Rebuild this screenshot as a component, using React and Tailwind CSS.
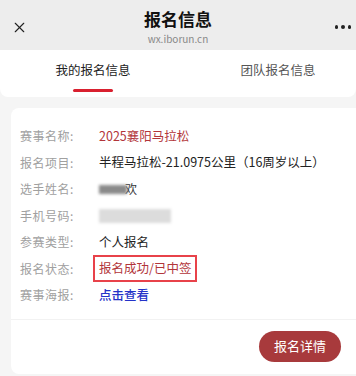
import { X } from 'lucide-react';

const rows = [
  { label: '赛事名称:', value: '2025襄阳马拉松', cls: 'text-[#b2353a]' },
  { label: '报名项目:', value: '半程马拉松-21.0975公里（16周岁以上）', cls: 'text-[#222]' },
  { label: '选手姓名:', blurName: true },
  { label: '手机号码:', blurPhone: true },
  { label: '参赛类型:', value: '个人报名', cls: 'text-[#222]' },
  { label: '报名状态:', value: '报名成功/已中签', cls: 'text-[#b2353a]', boxed: true },
  { label: '赛事海报:', value: '点击查看', cls: 'text-[#2432c8] font-medium' },
];

export default function App() {
  return (
    <div
      className="w-[356px] h-[376px] overflow-hidden bg-[#f5f5f5]"
      style={{ fontFamily: '"Noto Sans CJK SC", "Noto Sans", sans-serif' }}
    >
      {/* top bar */}
      <div className="h-[50px] bg-[#ededed] flex items-center">
        <div className="w-[60px] pl-[11px] pt-[4px]">
          <X size={17} strokeWidth={1.6} className="text-[#222]" />
        </div>
        <div className="flex-1 flex flex-col items-center pt-[4px]">
          <div className="text-[17px] font-bold leading-[20px] text-[#111]">报名信息</div>
          <div className="mt-[4px] text-[10px] leading-[12px] text-[#888]">wx.iborun.cn</div>
        </div>
        <div className="w-[60px] flex gap-[3px] justify-end pr-[5px] pt-[4px]">
          <span className="w-[3.5px] h-[3.5px] rounded-full bg-[#222]" />
          <span className="w-[3.5px] h-[3.5px] rounded-full bg-[#222]" />
          <span className="w-[3.5px] h-[3.5px] rounded-full bg-[#222]" />
        </div>
      </div>

      {/* tabs */}
      <div className="h-[47px] bg-white flex rounded-b-[8px]">
        <div className="w-[186px] shrink-0 flex flex-col items-center pt-[11px]">
          <span className="text-[12.5px] leading-[18px] text-[#222]">我的报名信息</span>
          <span className="mt-[10px] w-[40px] h-[3px] rounded-full bg-[#d9202f]" />
        </div>
        <div className="w-[184px] shrink-0 flex flex-col items-center pt-[11px]">
          <span className="text-[12.5px] leading-[18px] text-[#555]">团队报名信息</span>
        </div>
      </div>

      {/* card */}
      <div className="mt-[11px] ml-[11px] w-[360px] bg-white rounded-[8px]">
        <div className="pt-[15px] pb-[10px]">
          {rows.map((r) => (
            <div key={r.label} className="h-[26.5px] flex items-center pl-[9px]">
              <span className="w-[79px] text-[12px] text-[#a0a0a0] tracking-[0.5px]">{r.label}</span>
              {r.blurName && (
                <span className="flex items-center">
                  <span className="w-[28px] h-[9px] bg-[#8a8a8a] blur-[1.5px]" />
                  <span className="text-[12px] text-[#333] -ml-[2px]">欢</span>
                </span>
              )}
              {r.blurPhone && (
                <span className="w-[72px] h-[14px] bg-[#dcdcdc] blur-[1.5px]" />
              )}
              {r.value && (
                <span
                  className={`text-[12.5px] ${r.cls} ${
                    r.boxed ? 'border-2 border-[#e8424a] px-[4px] py-[2px] -ml-[6px]' : ''
                  }`}
                >
                  {r.value}
                </span>
              )}
            </div>
          ))}
        </div>
        <div className="border-t border-[#f2f2f2] h-[55px] pt-[11px]">
          <button className="ml-[248px] w-[82px] h-[31px] rounded-full bg-[#a83a3c] text-white text-[13px]">
            报名详情
          </button>
        </div>
      </div>
    </div>
  );
}
